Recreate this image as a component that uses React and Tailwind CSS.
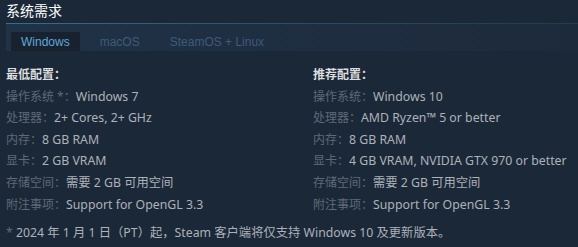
import React from 'react'

const minimum = [
  ['操作系统 *：', 'Windows 7'],
  ['处理器：', '2+ Cores, 2+ GHz'],
  ['内存：', '8 GB RAM'],
  ['显卡：', '2 GB VRAM'],
  ['存储空间：', '需要 2 GB 可用空间'],
  ['附注事项：', 'Support for OpenGL 3.3'],
]

const recommended = [
  ['操作系统：', 'Windows 10'],
  ['处理器：', 'AMD Ryzen™ 5 or better'],
  ['内存：', '8 GB RAM'],
  ['显卡：', '4 GB VRAM, NVIDIA GTX 970 or better'],
  ['存储空间：', '需要 2 GB 可用空间'],
  ['附注事项：', 'Support for OpenGL 3.3'],
]

function ReqColumn({ title, rows }) {
  return (
    <div>
      <div className="font-semibold text-[#dcdedf]">{title}</div>
      <ul>
        {rows.map(([label, value]) => (
          <li key={label} className="whitespace-nowrap">
            <span className="text-[#5f6a75]">{label}</span>
            <span className="text-[#acb2b8] text-[12.3px]">{value}</span>
          </li>
        ))}
      </ul>
    </div>
  )
}

export default function App() {
  return (
    <div
      className="w-[578px] h-[247px] bg-[#1b2838] pl-[6px] overflow-hidden"
      style={{ fontFamily: '"Liberation Sans", Arial, "Noto Sans CJK SC", sans-serif' }}
    >
      {/* Title */}
      <div className="pt-[2px] h-[23px] text-[14px] leading-[18px] text-white">系统需求</div>
      <div className="h-px bg-gradient-to-r from-[#3a6d8b] via-[#2c4d66] to-[#233a4f]" />

      {/* Tabs */}
      <div className="h-[27px] flex items-end gap-[10px] pl-[5px] bg-gradient-to-r from-[#203247] to-[#1d2a3b] text-[12px]">
        <div className="h-[19px] px-[10px] flex items-center bg-[#18222f] text-[#5fa8dd]">Windows</div>
        <div className="h-[19px] px-[10px] flex items-center text-[#3d5b78]">macOS</div>
        <div className="h-[19px] px-[10px] flex items-center text-[#3d5b78]">SteamOS + Linux</div>
      </div>

      {/* Requirements */}
      <div
        className="mt-[13px] grid grid-cols-[307px_1fr] text-[12px] leading-[21.6px]"
        style={{ fontFamily: '"Noto Sans", "Noto Sans CJK SC", sans-serif' }}
      >
        <ReqColumn title="最低配置：" rows={minimum} />
        <ReqColumn title="推荐配置：" rows={recommended} />
      </div>

      <div
        className="mt-[7px] text-[12.3px] leading-[21.6px] text-[#acb2b8] whitespace-nowrap"
        style={{ fontFamily: '"Noto Sans", "Noto Sans CJK SC", sans-serif' }}
      >
        <span className="text-[#5f6a75]">*</span> 2024 年 1 月 1 日（PT）起，Steam 客户端将仅支持 Windows 10 及更新版本。
      </div>
    </div>
  )
}
